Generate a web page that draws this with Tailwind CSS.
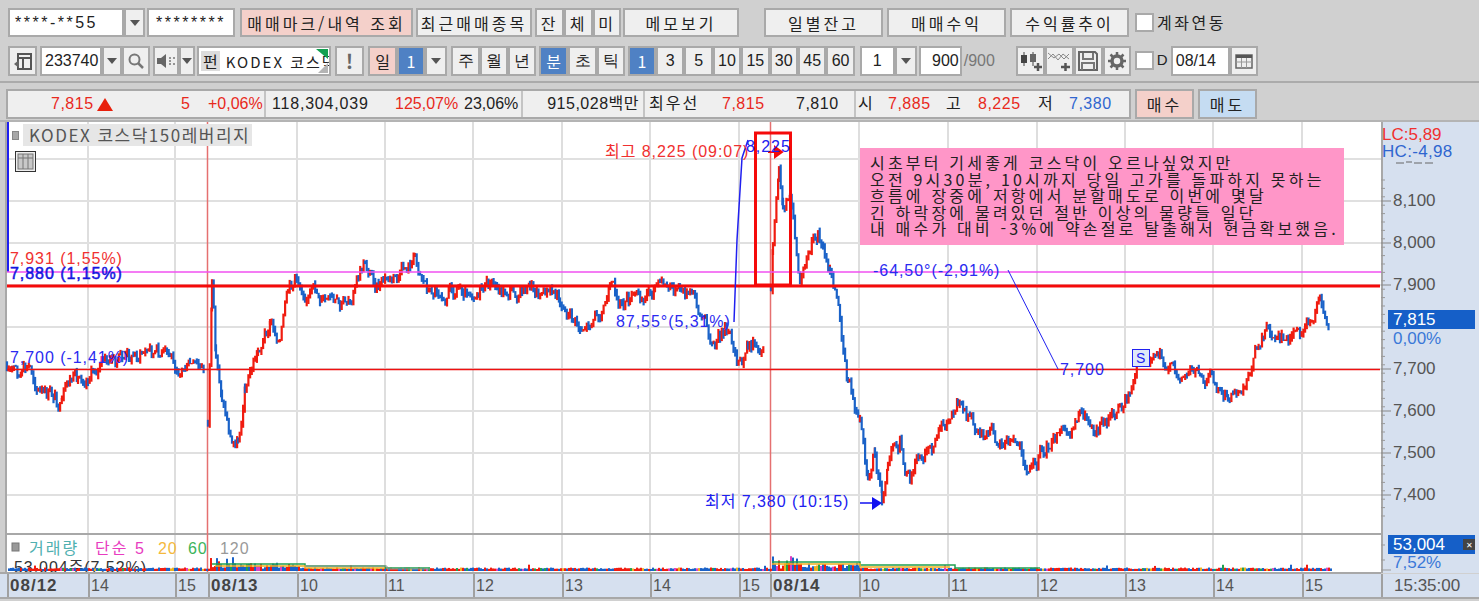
<!DOCTYPE html>
<html lang="ko">
<head>
<meta charset="utf-8">
<title>KODEX chart</title>
<script src="https://cdn.jsdelivr.net/npm/@tailwindcss/browser@4"></script>
</head>
<body class="m-0 bg-[#d0d0d0]">
<div id="root" class="relative w-[1479px] h-[601px] overflow-hidden bg-[#d0d0d0] text-[#222] font-['Noto_Sans_CJK_KR','Liberation_Sans',sans-serif]"></div>
<script>
const root = document.getElementById('root');

const btn = "flex items-center justify-center shrink-0 h-full border-2 border-[#a9a9a9] bg-[#efefef] text-[16px] leading-none tracking-[3px] text-[#222]";
const numBtn = "flex items-center justify-center shrink-0 h-full border-2 border-[#a9a9a9] bg-[#efefef] text-[16px] leading-none text-[#222] font-['Liberation_Sans',sans-serif]";
const whiteBox = "flex items-center shrink-0 h-full border-2 border-[#a9a9a9] bg-white text-[16px] leading-none text-[#222] font-['Liberation_Sans',sans-serif]";
const blueBtn = "flex items-center justify-center shrink-0 h-full border-2 border-[#a9a9a9] bg-[#4f81c4] text-[16px] leading-none text-white";
const pinkBtn = "flex items-center justify-center shrink-0 h-full border-2 border-[#a9a9a9] bg-[#f4d0ca] text-[16px] leading-none tracking-[3px] text-[#222]";
const arrow = `<svg width="10" height="6" viewBox="0 0 10 6"><path d="M0 0h10L5 6z" fill="#555"/></svg>`;

const tab = (label, w, cls = btn) => `<div class="${cls}" style="width:${w}px">${label}</div>`;
const drop = (w) => `<div class="${btn}" style="width:${w}px">${arrow}</div>`;

const toolbarIcons = `
  <div class="${btn} w-[29px]"><svg width="20" height="20" viewBox="0 0 20 20"><rect x="5" y="3" width="13" height="15" fill="none" stroke="#555" stroke-width="2"/><path d="M5 7h13M10 7v11" stroke="#555" stroke-width="2"/><path d="M1 13l5-4v8z" fill="#666"/></svg></div>`;
const searchIcon = `<svg width="18" height="18" viewBox="0 0 18 18"><circle cx="7.500" cy="7.500" r="5" fill="none" stroke="#777" stroke-width="2"/><path d="M11 11l5 5" stroke="#777" stroke-width="2.500"/></svg>`;
const speakerIcon = `<svg width="20" height="16" viewBox="0 0 20 16"><path d="M1 5h4l5-4v14l-5-4H1z" fill="#666"/><path d="M13 5h2M17 5h2M13 8h2M13 11h2M17 11h2" stroke="#777" stroke-width="1.500"/></svg>`;
const candleIcon = `<svg width="24" height="22" viewBox="0 0 24 22"><path d="M6 2v14M15 2v14" stroke="#444"/><rect x="3" y="5" width="6" height="8" fill="#444"/><rect x="12" y="4" width="6" height="8" fill="#666"/><path d="M16 17h8M20 13v8" stroke="#555" stroke-width="2.500"/></svg>`;
const lineIcon = `<svg width="24" height="22" viewBox="0 0 24 22"><path d="M1 9l5-5 5 6 5-6 6 5M1 3l6 5 5-4 5 5 5-5" fill="none" stroke="#888"/><path d="M14 17h9M18.500 13v8" stroke="#555" stroke-width="2.500"/></svg>`;
const saveIcon = `<svg width="22" height="22" viewBox="0 0 22 22"><path d="M2 2h16l2 2v16H2z" fill="none" stroke="#666" stroke-width="2"/><path d="M6 3v6h10V3M5 20v-7h12v7" fill="none" stroke="#777" stroke-width="2"/></svg>`;
const gearIcon = `<svg width="20" height="20" viewBox="0 0 20 20"><circle cx="10" cy="10" r="5" fill="none" stroke="#666" stroke-width="3.500"/><path d="M10 1v4M10 15v4M1 10h4M15 10h4M3.500 3.500l3 3M13.500 13.500l3 3M3.500 16.500l3-3M13.500 6.500l3-3" stroke="#666" stroke-width="2.500"/></svg>`;
const calIcon = `<svg width="18" height="16" viewBox="0 0 18 16"><rect x="1" y="2" width="16" height="13" fill="none" stroke="#666" stroke-width="1.500"/><path d="M1 3.500h16" stroke="#555" stroke-width="3"/><path d="M1 9h16M6.500 5v10M11.500 5v10" stroke="#999"/></svg>`;

const row1 = `
<div class="flex h-[29px] ml-[8px]">
  <div class="${whiteBox} w-[116px] pl-[5px] tracking-[2.500px]">****-**55</div>
  ${drop(21)}
  <div class="${whiteBox} w-[88px] ml-[2px] justify-center tracking-[2.500px]">********</div>
  ${tab('매매마크/내역 조회', 173, pinkBtn + ' ml-[5px]')}
  ${tab('최근매매종목', 116, btn + ' ml-[3px]')}
  ${tab('잔', 29, btn + ' ml-[3px]')}${tab('체', 29, btn)}${tab('미', 28, btn)}
  ${tab('메모보기', 116, btn + ' ml-[2px]')}
  ${tab('일별잔고', 119, btn + ' ml-[25px]')}
  ${tab('매매수익', 119, btn + ' ml-[4px]')}
  ${tab('수익률추이', 119, btn + ' ml-[4px]')}
  <div class="w-[19px] h-[19px] ml-[6px] mt-[5px] bg-white border-2 border-[#a9a9a9]"></div>
  <div class="ml-[3px] text-[16px] leading-[29px] tracking-[2.500px]">계좌연동</div>
</div>`;

const minutes = ['3', '5', '10', '15', '30', '45', '60'];
const row2 = `
<div class="flex h-[30px] ml-[8px] mt-[9px]">
  ${toolbarIcons}
  <div class="${whiteBox} w-[62px] ml-[3px] pl-[3px]">233740</div>
  ${drop(20)}
  <div class="${btn} w-[28px]">${searchIcon}</div>
  <div class="${btn} w-[26px] ml-[3px]">${speakerIcon}</div>
  ${drop(16)}
  <div class="relative ${whiteBox} w-[134px] ml-[2px] pl-[2px] overflow-hidden whitespace-nowrap">
    <span class="bg-[#dcdcdc] px-[2px] py-[2px] text-[16px] font-['Noto_Sans_CJK_KR',sans-serif]">펀</span>
    <span class="ml-[6px] text-[15px] tracking-[2px] font-['Noto_Sans_CJK_KR',sans-serif]">KODEX 코스닥</span>
    <svg class="absolute top-0 right-0" width="14" height="26" viewBox="0 0 14 26"><path d="M1 1h12v10z" fill="#12a050"/><path d="M13 15v10H3z" fill="#b4b4b4"/></svg>
  </div>
  <div class="${btn} w-[29px] ml-[4px] text-[20px] font-bold !text-[#666] !tracking-[0px]">!</div>
  ${tab('일', 29, pinkBtn + ' ml-[4px] !tracking-[0px]')}${tab('1', 28, blueBtn)}${drop(22)}
  ${tab('주', 29, numBtn + ' ml-[4px]')}${tab('월', 28, numBtn)}${tab('년', 28, numBtn)}
  ${tab('분', 29, blueBtn + ' ml-[3px]')}${tab('초', 29, numBtn)}${tab('틱', 28, numBtn)}
  ${tab('1', 28, blueBtn + ' ml-[3px]')}
  ${minutes.map(m => tab(m, 28.4, numBtn)).join('')}
  <div class="${whiteBox} w-[35px] ml-[5px] justify-center">1</div>
  ${drop(22)}
  <div class="${whiteBox} w-[43px] ml-[2px] justify-end pr-[1px]">900</div>
  <div class="w-[38px] ml-[2px] text-[16px] leading-[30px] text-[#777] font-['Liberation_Sans',sans-serif]">/900</div>
  <div class="${btn} w-[29px] ml-[14px] !tracking-[0px]">${candleIcon}</div>
  <div class="${btn} w-[29px] !tracking-[0px]">${lineIcon}</div>
  <div class="${btn} w-[29px] !tracking-[0px]">${saveIcon}</div>
  <div class="${btn} w-[28px] !tracking-[0px]">${gearIcon}</div>
  <div class="w-[19px] h-[19px] ml-[4px] mt-[5px] bg-white border-2 border-[#a9a9a9]"></div>
  <div class="w-[14px] ml-[3px] text-[15px] leading-[28px] font-['Liberation_Sans',sans-serif]">D</div>
  <div class="${whiteBox} w-[59px] pl-[3px]">08/14</div>
  <div class="${btn} w-[28px] !tracking-[0px]">${calIcon}</div>
</div>`;

const quoteCell = "flex items-center shrink-0 h-full border-r-2 border-[#c4c4c4] text-[16px] tracking-[0.500px] whitespace-nowrap font-['Liberation_Sans','Noto_Sans_CJK_KR',sans-serif]";
const row3 = `
<div class="flex h-[30px] ml-[6px] mt-[6px]">
  <div class="flex w-[1125px] h-full border-2 border-[#a9a9a9] bg-[#efefef]">
    <div class="${quoteCell} w-[258px] text-[#e8291c]">
      <span class="ml-[43px] w-[46px]">7,815</span>
      <svg width="16" height="13" viewBox="0 0 16 13"><path d="M8 0l8 13H0z" fill="#e8200c"/></svg>
      <span class="ml-[68px] w-[14px]">5</span>
      <span class="ml-[13px] tracking-[0px]">+0,06%</span>
    </div>
    <div class="${quoteCell} w-[257px]">
      <span class="ml-[6px] w-[102px] tracking-[0.800px]">118,304,039</span>
      <span class="ml-[21px] w-[62px] tracking-[0px] text-[#e8291c]">125,07%</span>
      <span class="ml-[7px] tracking-[0px]">23,06%</span>
    </div>
    <div class="${quoteCell} w-[122px] justify-end pr-[4px]">915,028백만</div>
    <div class="${quoteCell} w-[211px]">
      <span class="ml-[4px] w-[56px] tracking-[2px]">최우선</span>
      <span class="ml-[17px] w-[44px] text-[#e8291c]">7,815</span>
      <span class="ml-[30px]">7,810</span>
    </div>
    <div class="flex items-center text-[16px] tracking-[0.500px] font-['Liberation_Sans','Noto_Sans_CJK_KR',sans-serif]">
      <span class="ml-[2px] w-[18px]">시</span>
      <span class="ml-[12px] w-[44px] text-[#e8291c]">7,885</span>
      <span class="ml-[14px] w-[16px]">고</span>
      <span class="ml-[16px] w-[44px] text-[#e8291c]">8,225</span>
      <span class="ml-[16px] w-[16px]">저</span>
      <span class="ml-[15px] text-[#2f66d0]">7,380</span>
    </div>
  </div>
  ${tab('매수', 59, pinkBtn + ' ml-[4px]')}
  ${tab('매도', 59, 'flex items-center justify-center shrink-0 h-full border-2 border-[#a9a9a9] bg-[#c5dcf2] text-[16px] leading-none tracking-[3px] ml-[4px]')}
</div>`;

// ---- chart ----
const gridX = [88, 175, 297, 385, 473, 562, 650, 739, 859, 948, 1037, 1125, 1213, 1302];
const gridP = [8200, 8100, 8000, 7900, 7800, 7700, 7600, 7500, 7400];
const yOf = p => 369 - (p - 7700) * 0.42;

const series = [
  [[7,365],[14,372],[22,378],[30,372],[45,400],[55,398],[62,408],[70,385],[78,382],[88,372],[100,366],[112,362],[130,358],[150,352],[170,360],[190,368],[205,378]],
  [[208,420],[212,285],[216,360],[222,395],[232,445],[238,440],[245,385],[258,352],[270,322],[280,340],[288,300],[295,282],[305,290],[320,298],[340,315],[350,295],[365,265],[380,285],[400,280],[415,258],[430,292],[450,285],[480,285],[500,292],[530,287],[560,300],[580,330],[590,320],[610,295],[630,305],[655,285],[680,295],[695,300],[715,350],[725,330],[742,370],[748,345],[765,345]],
  [[771,286],[773,240],[779,155],[783,205],[790,190],[795,240],[800,285],[805,265],[818,232],[830,270],[840,320],[848,380],[860,430],[868,495],[875,450],[882,500],[888,460],[900,445],[910,480],[920,455],[940,440],[958,400],[975,420],[985,430],[1000,440],[1020,445],[1030,468],[1045,445],[1060,435],[1080,408],[1095,425],[1115,415],[1130,395],[1140,365],[1160,350],[1175,375],[1200,370],[1215,380],[1228,400],[1245,375],[1265,330],[1280,345],[1300,335],[1320,308],[1330,322]]
];

let seed = 17;
const rnd = () => (seed = (seed * 9301 + 49297) % 233280) / 233280;

function candles(points) {
  let out = '';
  let prev = points[0][1];
  let walk = 0;
  for (let i = 0; i < points.length - 1; i++) {
    const [x0, y0] = points[i], [x1, y1] = points[i + 1];
    for (let x = x0; x < x1; x += 1.7) {
      const base = y0 + (y1 - y0) * (x - x0) / (x1 - x0);
      walk = walk * 0.7 + (rnd() - 0.5) * 14;
      const close = base + walk;
      const up = close < prev;
      const top = Math.min(prev, close) - rnd() * 4;
      const bot = Math.max(prev, close) + rnd() * 4;
      out += `<path d="M${x.toFixed(1)} ${top.toFixed(1)}V${(bot + 0.5).toFixed(1)}" stroke="${up ? '#f01c10' : '#1a62c8'}" stroke-width="2.200"/>`;
      prev = close;
    }
  }
  return out;
}

const volColors = ['#f01c10', '#1a62c8', '#f0b020', '#e040c0', '#20a050'];
function volume() {
  let out = '';
  for (let x = 8; x < 1332; x += 2) {
    let h = 2 + rnd() * 1.5;
    if (x > 208 && x < 240) h += rnd() * 12;
    else if (x >= 240 && x < 300) h += rnd() * 5;
    else if (x > 770 && x < 800) h += rnd() * 13;
    else if (x >= 800 && x < 860) h += rnd() * 5;
    else if (rnd() > 0.98) h += 3;
    out += `<rect x="${x}" y="${571 - h}" width="2" height="${h}" fill="${volColors[rnd() > 0.6 ? 1 : rnd() > 0.4 ? 0 : Math.floor(rnd() * 5)]}"/>`;
  }
  out += `<path d="M212 564H305V566H385V568H430" fill="none" stroke="#20a050" stroke-width="1.500"/><path d="M215 566H305V568H385" fill="none" stroke="#f0b020" stroke-width="1.500"/><path d="M305 566H387V569H430" fill="none" stroke="#999" stroke-width="1"/>`;
  out += `<path d="M772 562H860V565H955V568H1040" fill="none" stroke="#20a050" stroke-width="1.500"/><path d="M772 564H860V567H950" fill="none" stroke="#f0b020" stroke-width="1.500"/>`;
  return out;
}

const chartFont = "font-family:'Liberation Sans','Noto Sans CJK KR',sans-serif";
const label = (x, y, t, color, size = 16, extra = 'letter-spacing=".95"') => `<text x="${x}" y="${y}" fill="${color}" font-size="${size}" style="${chartFont}" ${extra}>${t}</text>`;

const memo = [
  '시초부터 기세좋게 코스닥이 오르나싶었지만',
  '오전 9시30분, 10시까지 당일 고가를 돌파하지 못하는',
  '흐름에 장중에 저항에서 분할매도로 이번에 몇달',
  '긴 하락장에 물려있던 절반 이상의 물량들 일단',
  '내 매수가 대비 -3%에 약손절로 탈출해서 현금확보했음.'
];

const chartSvg = `
<svg class="absolute top-0 left-0" width="1479" height="601" viewBox="0 0 1479 601">
  ${gridX.map(x => `<path d="M${x} 122V573" stroke="#dedede" stroke-width="2"/>`).join('')}
  ${gridP.map(p => `<path d="M7 ${yOf(p)}H1381" stroke="#e0e0e0" stroke-width="2"/>`).join('')}
  <path d="M7 534H1381" stroke="#a8a8a8" stroke-width="2"/>
  <path d="M207.500 122V573M770.500 122V573" stroke="#e57070" stroke-width="1.500"/>

  ${series.map(candles).join('')}

  <path d="M8 122V272" stroke="#2020f0" stroke-width="2"/>
  <path d="M7 272H1381" stroke="#f050f0" stroke-width="1.500"/>
  <path d="M7 286H1380" stroke="#f50a0a" stroke-width="3"/>
  <path d="M7 369.500H1380" stroke="#f01010" stroke-width="1.500"/>
  <path d="M734 322L737 240L742 158L748 140" fill="none" stroke="#2020f0" stroke-width="1.500"/>
  <path d="M1008 270L1058 369" stroke="#2020f0" stroke-width="1"/>
  <rect x="755.500" y="133" width="35" height="152" fill="none" stroke="#f50a0a" stroke-width="3"/>
  <path d="M768 152H775M775 147l7 5-7 5z" stroke="#f50a0a" stroke-width="2" fill="#f50a0a"/>
  <path d="M860 503H872" stroke="#1010f0" stroke-width="1.500"/><path d="M872 497l10 6-10 7z" fill="#1010f0"/>

  ${label(10, 264, '7,931 (1,55%)', '#f03030')}
  ${label(10, 279, '7,880 (1,15%)', '#1515e0', 16, 'letter-spacing=".95" stroke="#1515e0" stroke-width=".5"')}
  ${label(10, 363, '7,700 (-1,41%)', '#2a2af0')}
  ${label(616, 327, '87,55°(5,31%)', '#2a2af0')}
  ${label(605, 157, '최고 8,225 (09:07)', '#f03030')}
  ${label(746, 152, '8,225', '#2020f0')}
  ${label(873, 276, '-64,50°(-2,91%)', '#2a2af0')}
  ${label(1060, 375, '7,700', '#2a2af0')}
  ${label(705, 507, '최저 7,380 (10:15)', '#2020f0')}
  <rect x="1132.500" y="349.500" width="17" height="17" fill="#dfe8f8" stroke="#2020f0"/>
  ${label(1136, 363, 'S', '#2020f0', 14)}

  ${label(14, 573, '53,004주(7,52%)', '#333')}
  ${volume()}
  <rect x="12" y="543" width="7" height="8" fill="#999" stroke="#777"/>
  ${label(29, 554, '거래량', '#50b0b0', 16, 'letter-spacing="2"')}
  ${label(95, 554, '단순 5', '#e83cc0', 16, 'letter-spacing="2"')}
  ${label(158, 554, '20', '#f4b93c')}
  ${label(188, 554, '60', '#3cb45a')}
  ${label(220, 554, '120', '#999999')}
  <rect x="0" y="572" width="1381" height="2" fill="#a8a8a8"/>
</svg>`;

const titleBar = `
<div class="absolute top-[124px] left-[12px] flex items-center">
  <div class="w-[7px] h-[9px] bg-[#a8a8a8] border border-[#888]"></div>
  <div class="ml-[4px] w-[229px] h-[22px] bg-[#e6e6e6] pl-[6px] text-[17px] leading-[22px] tracking-[1.500px] whitespace-nowrap text-[#555]">KODEX 코스닥150레버리지</div>
</div>
<svg class="absolute top-[151px] left-[15px]" width="21" height="21" viewBox="0 0 21 21"><rect x=".5" y=".5" width="20" height="20" fill="#eee" stroke="#333"/><rect x="3" y="3" width="15" height="15" fill="#c8c8c8" stroke="#777"/><path d="M3 7h15M8 3v15M13 3v15" stroke="#777"/></svg>`;

const memoBox = `
<div class="absolute top-[148px] left-[860px] w-[484px] h-[97px] bg-[#ff96c8] pl-[10px] pt-[6px] text-[16px] leading-[16.500px] tracking-[3.200px] whitespace-pre text-[#222]">${memo.join('\n')}</div>`;

// right price axis
const priceTicks = [8100, 8000, 7900, 7700, 7600, 7500, 7400];
const ticks = [];
for (let p = 8150; p >= 7350; p -= 20) ticks.push(yOf(p));
const axisSvg = `
<svg class="absolute top-0 left-0" width="1479" height="601" viewBox="0 0 1479 601">
  ${ticks.map(y => `<path d="M1381 ${y}H1385" stroke="#999"/>`).join('')}
  ${priceTicks.map(p => `<path d="M1381 ${yOf(p)}H1391" stroke="#888"/>`).join('')}
  <path d="M1381 545H1385M1381 560H1385M1381 570H1391" stroke="#999"/>
  <path d="M1396 163H1404M1406 162H1412M1414 163H1422M1425 163H1433" stroke="#666"/>
</svg>`;

const axisLabel = "absolute left-[1393px] text-[17px] leading-none text-[#555] font-['Liberation_Sans',sans-serif]";
const valueTag = "absolute left-[1388px] w-[87px] h-[19px] bg-[#155fc8] pl-[5px] text-[17px] leading-[19px] text-white font-['Liberation_Sans',sans-serif]";
const priceLabels = [['8,100', 8100], ['8,000', 8000], ['7,900', 7900], ['7,700', 7700], ['7,600', 7600], ['7,500', 7500], ['7,400', 7400]];
const rightAxis = `
<div class="absolute top-[122px] left-[1381px] w-[98px] h-[451px] bg-[#d6e0ef] border-l-2 border-[#a8a8a8]"></div>
${axisSvg}
<div class="absolute top-[126px] left-[1382px] text-[17px] leading-none text-[#f03030] font-['Liberation_Sans',sans-serif]">LC:5,89</div>
<div class="absolute top-[143px] left-[1382px] text-[17px] leading-none tracking-[0.300px] text-[#2f66d0] font-['Liberation_Sans',sans-serif]">HC:-4,98</div>
${priceLabels.map(([t, p]) => `<div class="${axisLabel}" style="top:${yOf(p) - 9}px">${t}</div>`).join('')}
<div class="${valueTag} top-[310px]">7,815</div>
<div class="${axisLabel} top-[330px] !text-[#3a78d8]">0,00%</div>
<div class="${valueTag} top-[535px]">53,004</div>
<div class="absolute top-[539px] left-[1463px] w-[12px] h-[11px] bg-[#444] text-[8px] leading-[11px] text-center text-white">✕</div>
<div class="${axisLabel} top-[554px] !text-[#3a78d8]">7,52%</div>`;

// bottom time axis
const timeLabels = [
  ['08/12', 8, 81, true], ['14', 88, 87], ['15', 175, 33], ['08/13', 208, 89, true], ['10', 297, 88], ['11', 385, 88], ['12', 473, 89],
  ['13', 562, 88], ['14', 650, 89], ['15', 739, 31], ['08/14', 770, 89, true], ['10', 859, 89], ['11', 948, 89], ['12', 1037, 88],
  ['13', 1125, 88], ['14', 1213, 89], ['15', 1302, 79]
];
const timeAxis = `
<div class="absolute top-[574px] left-0 flex w-[1479px] h-[25px] bg-[#d6e0ef] pl-[7px] border-b-2 border-[#a8a8a8] font-['Liberation_Sans',sans-serif]">
  ${timeLabels.map(([t, x, w, bold]) => `<div class="shrink-0 h-full border-l-2 border-[#a0a0a0] pl-[1px] leading-[24px] ${bold ? 'text-[17px] tracking-[1px] font-bold text-[#444]' : 'text-[16px] text-[#555]'}" style="width:${w}px">${t}</div>`).join('')}
  <div class="shrink-0 h-full w-[98px] border-l-2 border-[#a0a0a0] pl-[11px] text-[17px] leading-[24px] text-[#555]">15:35:00</div>
</div>`;

root.innerHTML = `
<div class="pt-[8px]">
  ${row1}
  ${row2}
  <div class="mt-[5px] h-[2px] bg-[#ababab]"></div>
  ${row3}
</div>
<div class="absolute top-[120px] left-0 w-[1479px] h-[2px] bg-[#b4b4b4]"></div>
<div class="absolute top-[122px] left-0 w-[1381px] h-[452px] bg-white border-l-[7px] border-[#cfcfcf]"></div>
<div class="absolute top-[122px] left-[5px] w-[2px] h-[452px] bg-[#a8a8a8]"></div>
${chartSvg}
${titleBar}
${memoBox}
${rightAxis}
${timeAxis}
`;
</script>
</body>
</html>
